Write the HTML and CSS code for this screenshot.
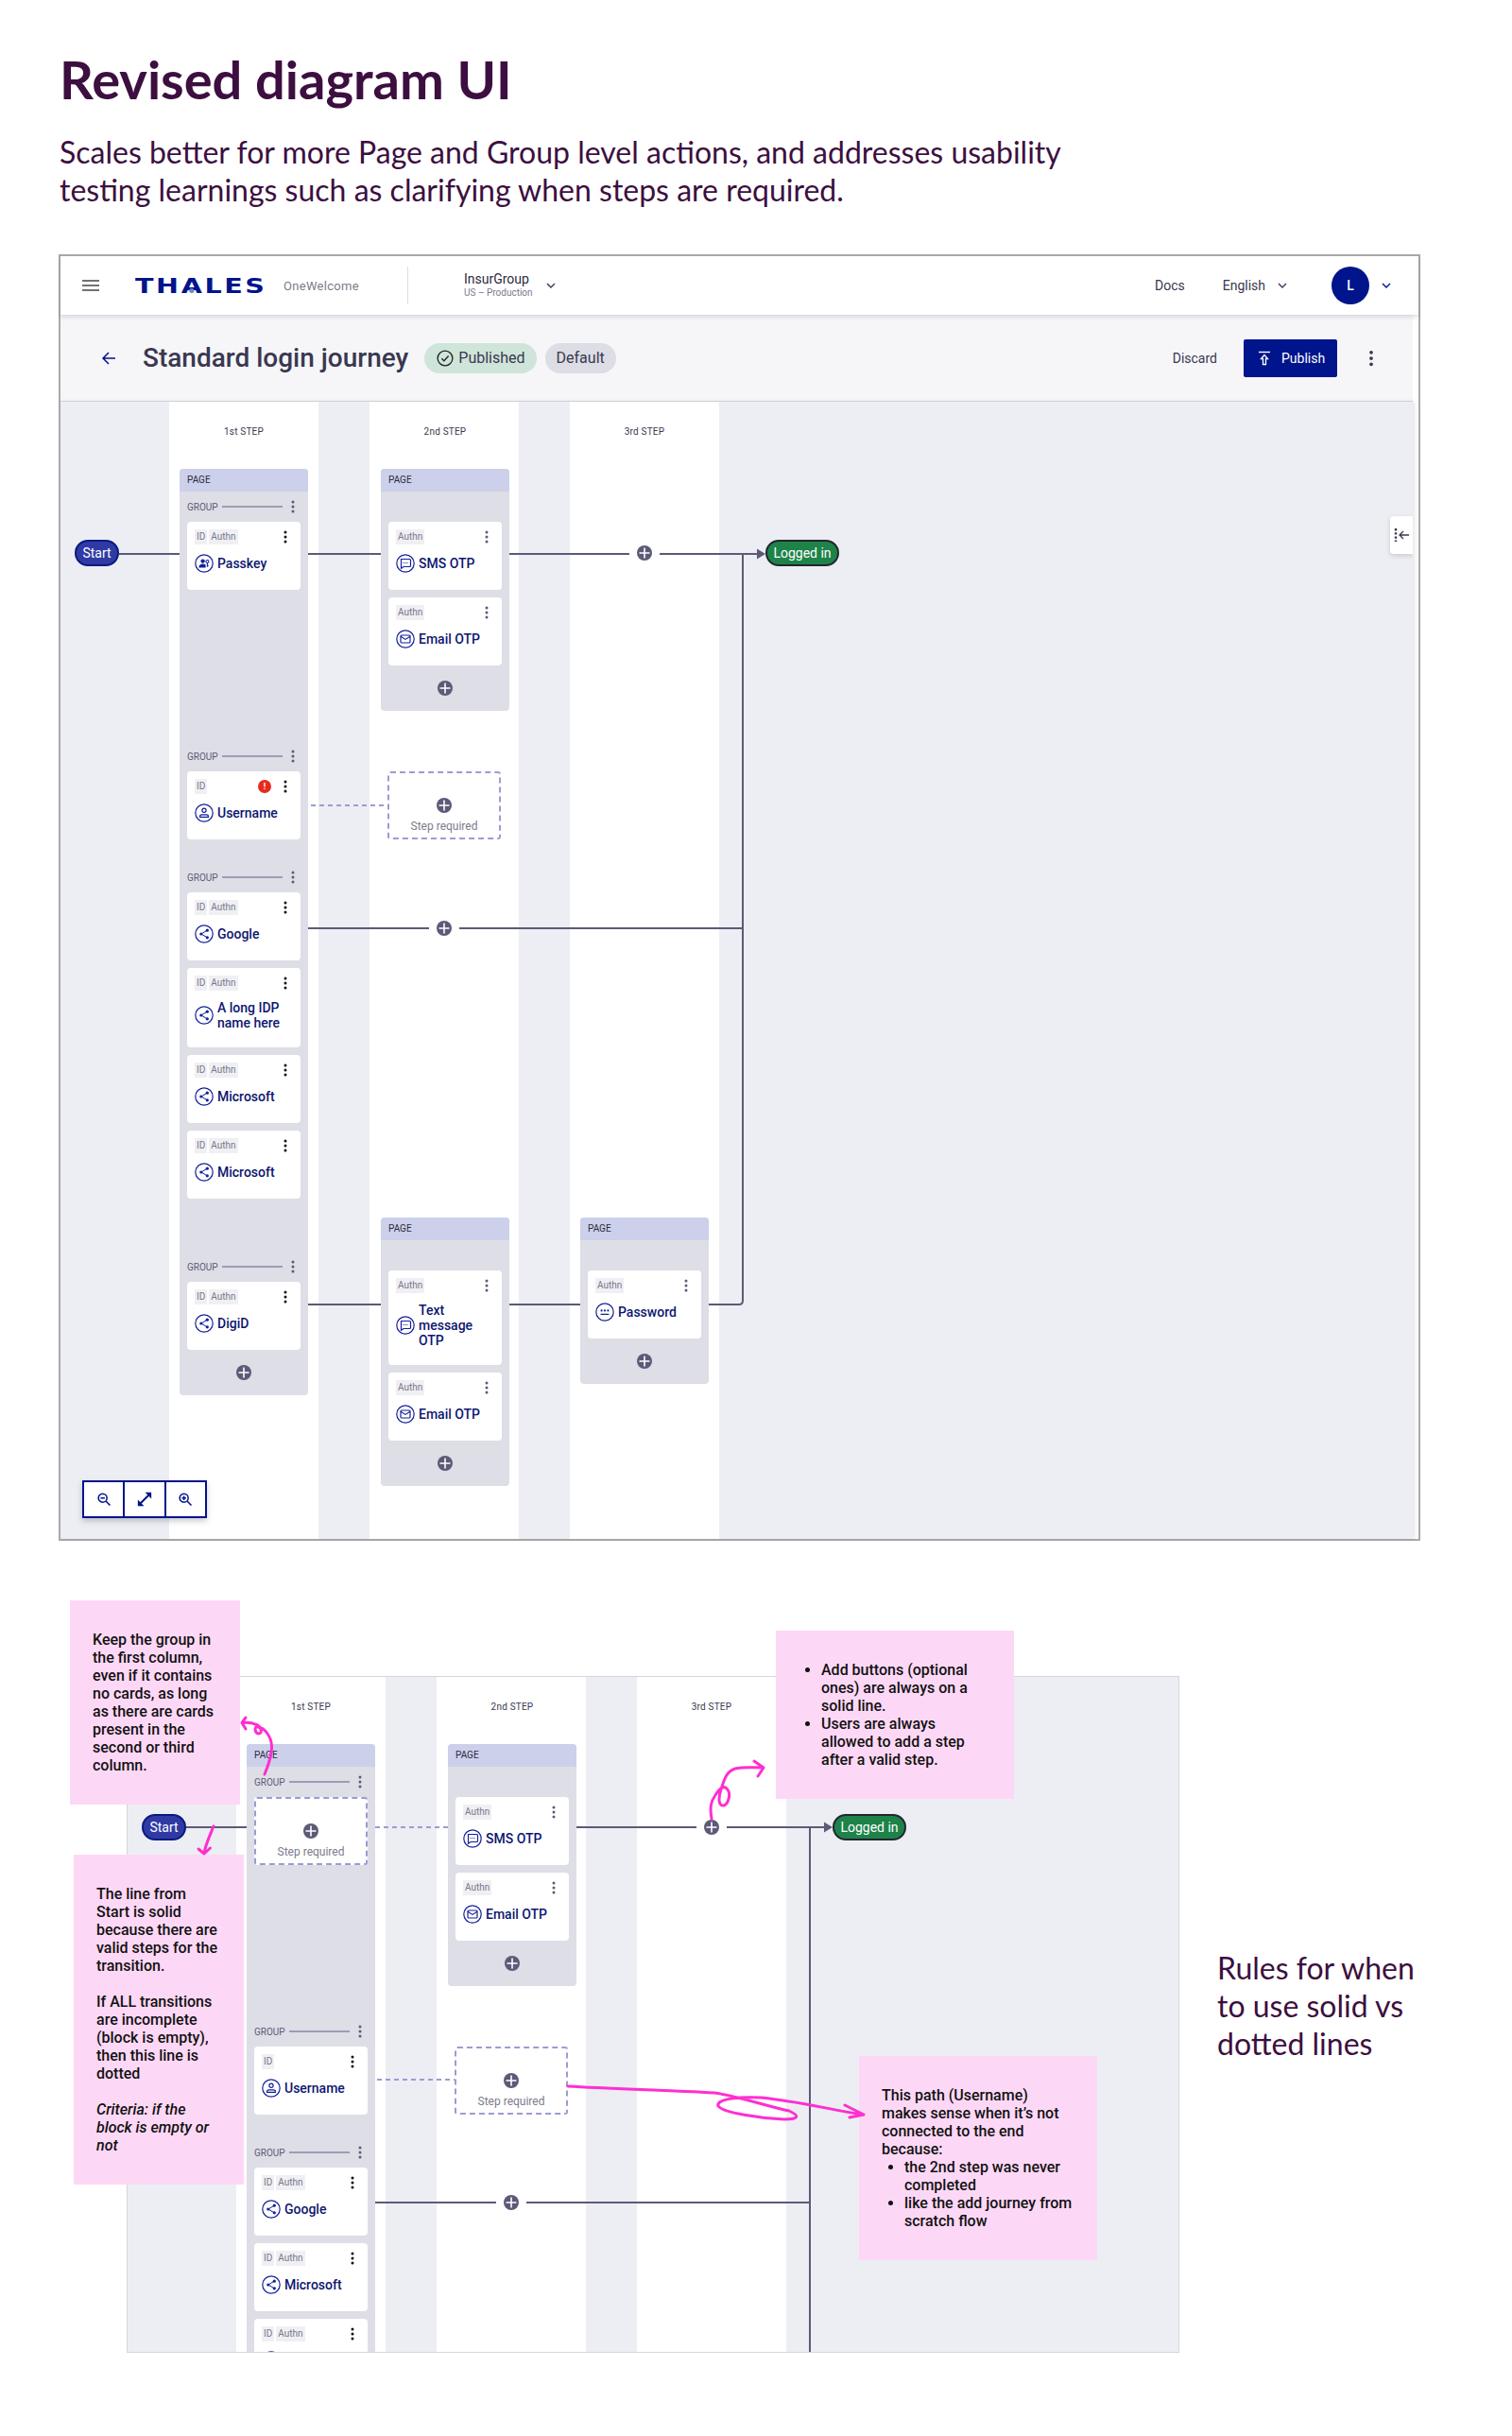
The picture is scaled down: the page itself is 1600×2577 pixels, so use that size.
FILE: index.html
```html
<!DOCTYPE html>
<html lang="en">
<head>
    <meta charset="UTF-8">
    <title>Revised diagram UI</title>
    <link rel="stylesheet" href="styles.css">
</head>
<body>
<svg class="defs" width="0" height="0">
    <symbol id="i-plus" viewBox="0 0 16 16"><circle cx="8" cy="8" r="8" fill="#5c5a78"/><path d="M8 2.5v11M2.5 8h11" stroke="#fff" stroke-width="1.6"/></symbol>
    <symbol id="i-kebab" viewBox="0 0 16 16"><circle cx="8" cy="3" r="1.5" fill="currentColor"/><circle cx="8" cy="8" r="1.5" fill="currentColor"/><circle cx="8" cy="13" r="1.5" fill="currentColor"/></symbol>
    <symbol id="i-share" viewBox="0 0 20 20"><circle cx="10" cy="10" r="9.2" fill="none" stroke="#14209a" stroke-width="1.2"/><path d="M13.3 6.2 6.8 10l6.5 3.8" fill="none" stroke="#14209a" stroke-width="1"/><circle cx="13.3" cy="6.2" r="1.6" fill="#14209a"/><circle cx="6.8" cy="10" r="1.6" fill="#14209a"/><circle cx="13.3" cy="13.8" r="1.6" fill="#14209a"/></symbol>
    <symbol id="i-passkey" viewBox="0 0 20 20"><circle cx="10" cy="10" r="9.2" fill="none" stroke="#14209a" stroke-width="1.2"/><circle cx="8.6" cy="7.6" r="2.2" fill="#14209a"/><path d="M4.4 14.4c0-2.6 2-3.8 4.2-3.8 1.2 0 2.2.3 3 .9v2.9z" fill="#14209a"/><circle cx="13.4" cy="8" r="1.5" fill="none" stroke="#14209a" stroke-width="1.1"/><path d="M13.4 9.5v4.2M13.4 12.2h1.4" fill="none" stroke="#14209a" stroke-width="1.1"/></symbol>
    <symbol id="i-sms" viewBox="0 0 20 20"><circle cx="10" cy="10" r="9.2" fill="none" stroke="#14209a" stroke-width="1.2"/><path d="M5.5 5.5h9a1 1 0 0 1 1 1v6a1 1 0 0 1-1 1H8l-2.5 1.8z" fill="none" stroke="#14209a" stroke-width="1.2"/><path d="M7.5 9.5h5" stroke="#14209a" stroke-width="1" stroke-dasharray="1 1"/></symbol>
    <symbol id="i-email" viewBox="0 0 20 20"><circle cx="10" cy="10" r="9.2" fill="none" stroke="#14209a" stroke-width="1.2"/><rect x="5" y="6" width="10" height="8" rx="1" fill="none" stroke="#14209a" stroke-width="1.2"/><path d="M5 7.2 10 10.4l5-3.2" fill="none" stroke="#14209a" stroke-width="1.2"/></symbol>
    <symbol id="i-user" viewBox="0 0 20 20"><circle cx="10" cy="10" r="9.2" fill="none" stroke="#14209a" stroke-width="1.2"/><circle cx="10" cy="7.2" r="2.1" fill="none" stroke="#14209a" stroke-width="1.2"/><path d="M5.6 14.4v-.8c0-1.2 1-1.8 2-1.8h4.8c1 0 2 .6 2 1.8v.8z" fill="none" stroke="#14209a" stroke-width="1.2"/></symbol>
    <symbol id="i-password" viewBox="0 0 20 20"><circle cx="10" cy="10" r="9.2" fill="none" stroke="#14209a" stroke-width="1.2"/><circle cx="6.6" cy="8.4" r="1.1" fill="#14209a"/><circle cx="10" cy="8.4" r="1.1" fill="#14209a"/><circle cx="13.4" cy="8.4" r="1.1" fill="#14209a"/><path d="M5.6 12.4h8.8" stroke="#14209a" stroke-width="1.2"/></symbol>
    <symbol id="i-chevron" viewBox="0 0 12 12"><path d="M2 4l4 4 4-4" fill="none" stroke="currentColor" stroke-width="1.4"/></symbol>
    <symbol id="i-zoom-out" viewBox="0 0 20 20"><circle cx="8.5" cy="8.5" r="5" fill="none" stroke="#00148c" stroke-width="1.7"/><path d="M6 8.5h5M12.2 12.2l5 5" fill="none" stroke="#00148c" stroke-width="1.7"/></symbol>
    <symbol id="i-zoom-in" viewBox="0 0 20 20"><circle cx="8.5" cy="8.5" r="5" fill="none" stroke="#00148c" stroke-width="1.7"/><path d="M6 8.5h5M8.5 6v5M12.2 12.2l5 5" fill="none" stroke="#00148c" stroke-width="1.7"/></symbol>
    <symbol id="i-expand" viewBox="0 0 20 20"><path d="M5 15 15 5" stroke="#00148c" stroke-width="1.7"/><path d="M10.5 3.5h6v6zM9.5 16.5h-6v-6z" fill="#00148c"/></symbol>
</svg>

<header class="intro">
    <h1>Revised diagram UI</h1>
    <p>Scales better for more Page and Group level actions, and addresses usability<br>testing learnings such as clarifying when steps are required.</p>
</header>

<section class="frame">
    <div class="topbar">
        <svg class="burger" width="20" height="14" viewBox="0 0 20 14"><path d="M1 2h18M1 7h18M1 12h18" stroke="#444" stroke-width="1.6"/></svg>
        <span class="logo">THALES</span>
        <span class="product">OneWelcome</span>
        <span class="top-divider"></span>
        <div class="tenant">
            <span class="tenant-name">InsurGroup</span>
            <span class="tenant-env">US – Production</span>
        </div>
        <svg class="chevron tenant-chevron"><use href="#i-chevron"/></svg>
        <div class="top-right">
            <span class="top-link">Docs</span>
            <span class="top-link lang">English</span>
            <svg class="chevron"><use href="#i-chevron"/></svg>
            <span class="avatar">L</span>
            <svg class="chevron blue"><use href="#i-chevron"/></svg>
        </div>
    </div>
    <div class="subbar">
        <svg class="back" width="16" height="16" viewBox="0 0 16 16"><path d="M15 8H2M8 2 2 8l6 6" fill="none" stroke="#00148c" stroke-width="1.5"/></svg>
        <h2>Standard login journey</h2>
        <span class="pill pill-green">
            <svg width="18" height="18" viewBox="0 0 16 16"><circle cx="8" cy="8" r="7" fill="none" stroke="#222" stroke-width="1.2"/><path d="M4.8 8.2 7 10.4l4.2-4.6" fill="none" stroke="#222" stroke-width="1.2"/></svg>
            Published
        </span>
        <span class="pill pill-grey">Default</span>
        <div class="sub-right">
            <span class="discard">Discard</span>
            <button class="publish">
                <svg width="14" height="16" viewBox="0 0 14 16"><path d="M1 1.5h12" stroke="#fff" stroke-width="1.4"/><path d="M7 4.5 3.5 8.5h2v6h3v-6h2z" fill="none" stroke="#fff" stroke-width="1.3"/></svg>
                Publish
            </button>
            <svg class="sub-kebab"><use href="#i-kebab"/></svg>
        </div>
    </div>
    <div class="canvas canvas-main">
        <div class="col">
            <div class="col-label">1st STEP</div>
            <div class="block">
                <div class="block-head">PAGE</div>
                <div class="group">
                    <div class="group-row"><span>GROUP</span><i></i><svg class="kebab muted"><use href="#i-kebab"/></svg></div>
                    <div class="card">
                        <div class="card-top"><span class="tag">ID</span><span class="tag">Authn</span><svg class="kebab"><use href="#i-kebab"/></svg></div>
                        <div class="card-body"><svg class="card-icon"><use href="#i-passkey"/></svg><span class="card-name">Passkey</span></div>
                    </div>
                </div>
                <div class="group gap-lg">
                    <div class="group-row"><span>GROUP</span><i></i><svg class="kebab muted"><use href="#i-kebab"/></svg></div>
                    <div class="card">
                        <div class="card-top"><span class="tag">ID</span><span class="error-dot">!</span><svg class="kebab next"><use href="#i-kebab"/></svg></div>
                        <div class="card-body"><svg class="card-icon"><use href="#i-user"/></svg><span class="card-name">Username</span></div>
                    </div>
                </div>
                <div class="group gap-sm">
                    <div class="group-row"><span>GROUP</span><i></i><svg class="kebab muted"><use href="#i-kebab"/></svg></div>
                    <div class="card">
                        <div class="card-top"><span class="tag">ID</span><span class="tag">Authn</span><svg class="kebab"><use href="#i-kebab"/></svg></div>
                        <div class="card-body"><svg class="card-icon"><use href="#i-share"/></svg><span class="card-name">Google</span></div>
                    </div>
                    <div class="card">
                        <div class="card-top"><span class="tag">ID</span><span class="tag">Authn</span><svg class="kebab"><use href="#i-kebab"/></svg></div>
                        <div class="card-body"><svg class="card-icon"><use href="#i-share"/></svg><span class="card-name">A long IDP name here</span></div>
                    </div>
                    <div class="card">
                        <div class="card-top"><span class="tag">ID</span><span class="tag">Authn</span><svg class="kebab"><use href="#i-kebab"/></svg></div>
                        <div class="card-body"><svg class="card-icon"><use href="#i-share"/></svg><span class="card-name">Microsoft</span></div>
                    </div>
                    <div class="card">
                        <div class="card-top"><span class="tag">ID</span><span class="tag">Authn</span><svg class="kebab"><use href="#i-kebab"/></svg></div>
                        <div class="card-body"><svg class="card-icon"><use href="#i-share"/></svg><span class="card-name">Microsoft</span></div>
                    </div>
                </div>
                <div class="group gap-md">
                    <div class="group-row"><span>GROUP</span><i></i><svg class="kebab muted"><use href="#i-kebab"/></svg></div>
                    <div class="card">
                        <div class="card-top"><span class="tag">ID</span><span class="tag">Authn</span><svg class="kebab"><use href="#i-kebab"/></svg></div>
                        <div class="card-body"><svg class="card-icon"><use href="#i-share"/></svg><span class="card-name">DigiD</span></div>
                    </div>
                </div>
                <div class="add-row"><svg class="add"><use href="#i-plus"/></svg></div>
            </div>
        </div>
        <div class="col col-mid">
            <div class="col-label">2nd STEP</div>
            <div class="block">
                <div class="block-head">PAGE</div>
                <div class="group">
                    <div class="group-row"></div>
                    <div class="card">
                        <div class="card-top"><span class="tag">Authn</span><svg class="kebab muted"><use href="#i-kebab"/></svg></div>
                        <div class="card-body"><svg class="card-icon"><use href="#i-sms"/></svg><span class="card-name">SMS OTP</span></div>
                    </div>
                    <div class="card">
                        <div class="card-top"><span class="tag">Authn</span><svg class="kebab muted"><use href="#i-kebab"/></svg></div>
                        <div class="card-body"><svg class="card-icon"><use href="#i-email"/></svg><span class="card-name">Email OTP</span></div>
                    </div>
                </div>
                <div class="add-row"><svg class="add"><use href="#i-plus"/></svg></div>
            </div>
            <div class="step-req free">
                <svg class="add"><use href="#i-plus"/></svg>
                <span>Step required</span>
            </div>
            <div class="block low">
                <div class="block-head">PAGE</div>
                <div class="group">
                    <div class="group-row"></div>
                    <div class="card">
                        <div class="card-top"><span class="tag">Authn</span><svg class="kebab muted"><use href="#i-kebab"/></svg></div>
                        <div class="card-body"><svg class="card-icon"><use href="#i-sms"/></svg><span class="card-name">Text message OTP</span></div>
                    </div>
                    <div class="card">
                        <div class="card-top"><span class="tag">Authn</span><svg class="kebab muted"><use href="#i-kebab"/></svg></div>
                        <div class="card-body"><svg class="card-icon"><use href="#i-email"/></svg><span class="card-name">Email OTP</span></div>
                    </div>
                </div>
                <div class="add-row"><svg class="add"><use href="#i-plus"/></svg></div>
            </div>
        </div>
        <div class="col">
            <div class="col-label">3rd STEP</div>
            <div class="block third">
                <div class="block-head">PAGE</div>
                <div class="group">
                    <div class="group-row"></div>
                    <div class="card">
                        <div class="card-top"><span class="tag">Authn</span><svg class="kebab muted"><use href="#i-kebab"/></svg></div>
                        <div class="card-body"><svg class="card-icon"><use href="#i-password"/></svg><span class="card-name">Password</span></div>
                    </div>
                </div>
                <div class="add-row"><svg class="add"><use href="#i-plus"/></svg></div>
            </div>
        </div>

        <svg class="wires" width="1431" height="1203" viewBox="64 425 1431 1203">
            <path class="wire" d="M126 586H190M326 586H403M539 586H666M698 586H803M326 982H454M486 982H786M326 1380H403M539 1380H614M750 1380H782q4 0 4-4V586"/>
            <path class="wire-dots" d="M329 852H410"/>
            <path d="M801 580.5 810 586 801 591.500z" fill="#5c5a78"/>
            <use href="#i-plus" x="674" y="577" width="16" height="16"/>
            <use href="#i-plus" x="462" y="974" width="16" height="16"/>
        </svg>
        <span class="node node-start">Start</span>
        <span class="node node-end">Logged in</span>
        <div class="zoom-bar">
            <span><svg width="18" height="18"><use href="#i-zoom-out"/></svg></span>
            <span><svg width="22" height="22"><use href="#i-expand"/></svg></span>
            <span><svg width="18" height="18"><use href="#i-zoom-in"/></svg></span>
        </div>
        <div class="panel-tab">
            <svg width="20" height="20" viewBox="0 0 20 20"><path d="M4 3v14" stroke="#3a3850" stroke-width="2.400" stroke-dasharray="2.400 1.800"/><path d="M18 10H8M12 6 8 10l4 4" fill="none" stroke="#3a3850" stroke-width="1.300"/></svg>
        </div>
    </div>
</section>

<section class="review">
    <div class="canvas canvas-small">
        <div class="col">
            <div class="col-label">1st STEP</div>
            <div class="block">
                <div class="block-head">PAGE</div>
                <div class="group">
                    <div class="group-row"><span>GROUP</span><i></i><svg class="kebab muted"><use href="#i-kebab"/></svg></div>
                    <div class="step-req">
                        <svg class="add"><use href="#i-plus"/></svg>
                        <span>Step required</span>
                    </div>
                </div>
                <div class="group gap-lg">
                    <div class="group-row"><span>GROUP</span><i></i><svg class="kebab muted"><use href="#i-kebab"/></svg></div>
                    <div class="card">
                        <div class="card-top"><span class="tag">ID</span><svg class="kebab"><use href="#i-kebab"/></svg></div>
                        <div class="card-body"><svg class="card-icon"><use href="#i-user"/></svg><span class="card-name">Username</span></div>
                    </div>
                </div>
                <div class="group gap-sm">
                    <div class="group-row"><span>GROUP</span><i></i><svg class="kebab muted"><use href="#i-kebab"/></svg></div>
                    <div class="card">
                        <div class="card-top"><span class="tag">ID</span><span class="tag">Authn</span><svg class="kebab"><use href="#i-kebab"/></svg></div>
                        <div class="card-body"><svg class="card-icon"><use href="#i-share"/></svg><span class="card-name">Google</span></div>
                    </div>
                    <div class="card">
                        <div class="card-top"><span class="tag">ID</span><span class="tag">Authn</span><svg class="kebab"><use href="#i-kebab"/></svg></div>
                        <div class="card-body"><svg class="card-icon"><use href="#i-share"/></svg><span class="card-name">Microsoft</span></div>
                    </div>
                    <div class="card">
                        <div class="card-top"><span class="tag">ID</span><span class="tag">Authn</span><svg class="kebab"><use href="#i-kebab"/></svg></div>
                        <div class="card-body"><svg class="card-icon"><use href="#i-share"/></svg></div>
                    </div>
                </div>
            </div>
        </div>
        <div class="col col-mid">
            <div class="col-label">2nd STEP</div>
            <div class="block">
                <div class="block-head">PAGE</div>
                <div class="group">
                    <div class="group-row"></div>
                    <div class="card">
                        <div class="card-top"><span class="tag">Authn</span><svg class="kebab muted"><use href="#i-kebab"/></svg></div>
                        <div class="card-body"><svg class="card-icon"><use href="#i-sms"/></svg><span class="card-name">SMS OTP</span></div>
                    </div>
                    <div class="card">
                        <div class="card-top"><span class="tag">Authn</span><svg class="kebab muted"><use href="#i-kebab"/></svg></div>
                        <div class="card-body"><svg class="card-icon"><use href="#i-email"/></svg><span class="card-name">Email OTP</span></div>
                    </div>
                </div>
                <div class="add-row"><svg class="add"><use href="#i-plus"/></svg></div>
            </div>
            <div class="step-req free">
                <svg class="add"><use href="#i-plus"/></svg>
                <span>Step required</span>
            </div>
        </div>
        <div class="col">
            <div class="col-label">3rd STEP</div>
        </div>

        <svg class="wires" width="1112" height="714" viewBox="135 1774 1112 714">
            <path class="wire" d="M197 1933H261M610 1933H737M769 1933H873M857 1933V2489M397 2330H525M557 2330H857"/>
            <path class="wire-dots" d="M397 1933H474M399 2200H481"/>
            <path d="M872 1927.500 881 1933 872 1938.500z" fill="#5c5a78"/>
            <use href="#i-plus" x="745" y="1925" width="16" height="16"/>
            <use href="#i-plus" x="533" y="2322" width="16" height="16"/>
        </svg>
        <span class="node node-start">Start</span>
        <span class="node node-end">Logged in</span>
    </div>

    <aside class="rules">Rules for when<br>to use solid vs<br>dotted lines</aside>

    <div class="note note-group">Keep the group in the first column, even if it contains no cards, as long as there are cards present in the second or third column.</div>
    <div class="note note-start">
        <p>The line from Start is solid because there are valid steps for the transition.</p>
        <p>If ALL transitions are incomplete (block is empty), then this line is dotted</p>
        <p><em>Criteria: if the block is empty or not</em></p>
    </div>
    <div class="note note-add">
        <ul>
            <li>Add buttons (optional ones) are always on a solid line.</li>
            <li>Users are always allowed to add a step after a valid step.</li>
        </ul>
    </div>
    <div class="note note-path">
        This path (Username) makes sense when it’s not connected to the end because:
        <ul>
            <li>the 2nd step was never completed</li>
            <li>like the add journey from scratch flow</li>
        </ul>
    </div>

    <svg class="scribbles" width="1600" height="804" viewBox="0 1773 1600 804">
        <path d="M280 1877C285 1865 288 1855 287.500 1847C287 1838 281 1828 273 1827C268 1826 270 1834 274 1834C278 1834 277 1826 270 1824C266 1822 262 1822 257 1822.500M260 1817 256 1822.500 260 1829"/>
        <path d="M226 1932C222 1942 218 1950 216 1960M210 1956 216 1961 222.500 1955"/>
        <path d="M753 1924C751 1912 752 1906 757 1899C761 1893 765 1888 769 1892C774 1897 771 1908 766 1910C760 1911 760 1902 763 1893C766 1884 768 1874 778 1871C787 1869 797 1870 807 1870M798 1863 808 1870 802 1879"/>
        <path d="M601 2207C650 2210 710 2211 756 2214C780 2217 810 2228 835 2233C846 2238 846 2242 830 2242C805 2241 765 2235 760 2228C757 2220 785 2218 805 2219C840 2222 880 2232 913 2237M894 2227 914 2237 899 2240"/>
    </svg>
</section>
</body>
</html>
```

FILE: styles.css
```css
* {
    box-sizing: border-box;
}
body {
    margin: 0;
    background: #fff;
    font-family: Roboto, "Liberation Sans", sans-serif;
    color: #2c2a40;
}
.defs {
    position: absolute;
}

/* intro */
.intro {
    height: 269px;
    padding: 44px 0 0 63px;
    color: #3c0f40;
    font-family: Lato, sans-serif;
}
.intro h1 {
    margin: 0;
    font-size: 56px;
    line-height: 80px;
    font-weight: 700;
}
.intro p {
    margin: 17px 0 0;
    font-size: 32px;
    line-height: 40px;
}

/* app frame */
.frame {
    width: 1441px;
    height: 1361px;
    margin-left: 62px;
    border: 2px solid #aaa;
    display: flex;
    flex-direction: column;
    background: #fff;
}
.topbar {
    position: relative;
    z-index: 2;
    height: 62px;
    flex: none;
    display: flex;
    align-items: center;
    background: #fff;
    box-shadow: 0 2px 5px rgba(40, 40, 70, 0.18);
}
.burger {
    margin-left: 22px;
}
.logo {
    position: relative;
    margin-left: 37px;
    width: 157px;
    font-family: "DejaVu Sans", sans-serif;
    font-weight: 700;
    font-size: 22px;
    letter-spacing: 2px;
    color: #00148c;
    transform: scaleX(1.3);
    transform-origin: left center;
}
.logo::after {
    content: "";
    position: absolute;
    left: 44px;
    top: 15px;
    width: 4px;
    height: 5px;
    border-radius: 50%;
    background: #6f86d0;
}
.product {
    width: 131px;
    font-size: 13px;
    letter-spacing: 0.3px;
    color: #7c7b8c;
}
.top-divider {
    width: 1px;
    height: 40px;
    background: #dddde4;
}
.tenant {
    margin-left: 59px;
    display: flex;
    flex-direction: column;
}
.tenant-name {
    font-size: 14px;
    line-height: 16px;
}
.tenant-env {
    font-size: 10px;
    line-height: 14px;
    color: #7c7b8c;
}
.chevron {
    width: 12px;
    height: 12px;
    color: #3a3850;
}
.chevron.blue {
    color: #00148c;
    margin-left: 12px;
}
.tenant-chevron {
    margin-left: 13px;
}
.top-right {
    margin-left: auto;
    padding-right: 28px;
    display: flex;
    align-items: center;
}
.top-link {
    font-size: 14px;
    color: #3a3850;
}
.lang {
    margin-left: 40px;
    margin-right: 12px;
}
.avatar {
    width: 40px;
    height: 40px;
    margin-left: 46px;
    border-radius: 50%;
    background: #00148c;
    color: #fff;
    font-size: 14px;
    font-weight: 500;
    display: flex;
    align-items: center;
    justify-content: center;
}
.subbar {
    height: 92px;
    flex: none;
    display: flex;
    align-items: center;
    margin-right: 6px;
    background: #f6f6f9;
    border-bottom: 1px solid #d9d9e0;
}
.back {
    margin-left: 43px;
}
.subbar h2 {
    margin: 0 17px 0 28px;
    font-size: 28px;
    font-weight: 500;
    color: #3a3850;
}
.pill {
    height: 32px;
    padding: 0 12px;
    border-radius: 16px;
    display: flex;
    align-items: center;
    gap: 5px;
    font-size: 16px;
    color: #3a3850;
}
.pill-green {
    padding-left: 13px;
    background: #cfe5da;
}
.pill-grey {
    margin-left: 9px;
    background: #dcdde5;
}
.sub-right {
    margin-left: auto;
    display: flex;
    align-items: center;
}
.discard {
    font-size: 14px;
    color: #3a3850;
}
.publish {
    width: 99px;
    height: 40px;
    margin-left: 28px;
    border: none;
    border-radius: 2px;
    background: #00148c;
    color: #fff;
    font-family: inherit;
    font-size: 14px;
    display: flex;
    align-items: center;
    gap: 11px;
    padding-left: 15px;
}
.sub-kebab {
    width: 20px;
    height: 20px;
    margin: 0 34px 0 26px;
    color: #3a3850;
}

/* diagram */
.canvas {
    position: relative;
    display: flex;
    gap: 54px;
    padding-left: 115px;
    background: #edeef3;
    overflow: hidden;
}
.canvas-main {
    height: 1203px;
    margin-right: 6px;
    box-shadow: 2px 0 4px rgba(40, 40, 70, 0.12);
}
.col {
    width: 158px;
    padding: 0 11px;
    background: #fff;
}
.col-mid {
    padding: 0 10px 0 12px;
}
.col-label {
    height: 71px;
    padding-top: 24px;
    line-height: 16px;
    font-size: 10px;
    letter-spacing: 0.2px;
    text-align: center;
    color: #3a3850;
}
.block {
    background: #dddee6;
    border-radius: 4px;
    overflow: hidden;
}
.block.low {
    margin-top: 400px;
}
.block.third {
    margin-top: 792px;
}
.block-head {
    height: 24px;
    padding-left: 8px;
    line-height: 24px;
    font-size: 10px;
    background: #ccd0ea;
    color: #2c2a40;
}
.group {
    padding: 8px 8px 0;
    display: flex;
    flex-direction: column;
    gap: 8px;
}
.gap-lg {
    margin-top: 160px;
}
.gap-md {
    margin-top: 56px;
}
.gap-sm {
    margin-top: 24px;
}
.group-row {
    height: 16px;
    display: flex;
    align-items: center;
    font-size: 10px;
    color: #5c5a78;
}
.group-row i {
    flex: 1;
    height: 2px;
    margin: 0 3px 0 4px;
    background: #9d9cb6;
}
.kebab {
    width: 16px;
    height: 16px;
    margin-left: auto;
    flex: none;
    color: #111;
}
.kebab.muted {
    color: #5c5a78;
}
.kebab.next {
    margin-left: 5px;
}
.group-row .kebab {
    margin-left: 0;
}
.card {
    padding: 8px 8px 16px;
    background: #fff;
    border-radius: 4px;
}
.card-top {
    height: 16px;
    display: flex;
    align-items: center;
    gap: 2px;
}
.tag {
    height: 16px;
    padding: 0 2px;
    line-height: 16px;
    font-size: 10px;
    background: #f0f0f4;
    color: #77768a;
}
.error-dot {
    width: 14px;
    height: 14px;
    margin-left: auto;
    border-radius: 50%;
    background: #e62b1e;
    color: #fff;
    font-size: 9px;
    font-weight: 700;
    line-height: 14px;
    text-align: center;
}
.card-body {
    min-height: 24px;
    margin-top: 8px;
    display: flex;
    align-items: center;
    gap: 4px;
}
.card-icon {
    width: 20px;
    height: 20px;
    flex: none;
}
.card-name {
    padding: 2px 0;
    font-size: 14px;
    font-weight: 500;
    line-height: 16px;
    color: #0e1670;
}
.add {
    width: 16px;
    height: 16px;
    display: block;
}
.add-row {
    height: 48px;
    display: flex;
    align-items: center;
    justify-content: center;
}
.step-req {
    height: 72px;
    padding-top: 26px;
    display: flex;
    flex-direction: column;
    align-items: center;
    gap: 6px;
    border: 2px dashed #9a9cd4;
    border-radius: 3px;
    background: #fff;
    font-size: 12px;
    line-height: 16px;
    color: #7c7b8c;
}
.step-req.free {
    width: 120px;
    margin: 64px 0 0 7px;
}
.wires {
    position: absolute;
    left: 0;
    top: 0;
    pointer-events: none;
}
.wire {
    fill: none;
    stroke: #5c5a78;
    stroke-width: 2;
}
.wire-dots {
    fill: none;
    stroke: #9a9cd4;
    stroke-width: 2;
    stroke-dasharray: 5 4;
}
.node {
    position: absolute;
    top: 146px;
    height: 28px;
    border-radius: 14px;
    border: 2px solid;
    font-size: 14px;
    line-height: 24px;
    color: #fff;
    text-align: center;
}
.node-start {
    left: 15px;
    width: 47px;
    background: #2f3aa5;
    border-color: #0a1a80;
}
.node-end {
    left: 746px;
    width: 78px;
    background: #1d8348;
    border-color: #22262e;
}
.zoom-bar {
    position: absolute;
    left: 23px;
    bottom: 22px;
    width: 132px;
    height: 40px;
    display: flex;
    border: 2px solid #00148c;
    background: #fff;
    box-shadow: 0 3px 6px rgba(40, 40, 70, 0.25);
}
.zoom-bar span {
    flex: 1;
    display: flex;
    align-items: center;
    justify-content: center;
}
.zoom-bar span + span {
    border-left: 2px solid #00148c;
}
.panel-tab {
    position: absolute;
    right: 0;
    top: 121px;
    width: 24px;
    height: 40px;
    display: flex;
    align-items: center;
    justify-content: center;
    background: #fff;
    border-radius: 4px 0 0 4px;
    box-shadow: 0 2px 5px rgba(40, 40, 70, 0.18);
}

/* second diagram and notes */
.review {
    position: relative;
    height: 804px;
    margin-top: 143px;
    padding-left: 134px;
    display: flex;
    align-items: flex-start;
}
.canvas-small {
    width: 1114px;
    height: 716px;
    border: 1px solid #d5d5dd;
}
.canvas-small .node {
    top: 145px;
}
.rules {
    margin: 289px 0 0 40px;
    color: #3c0f40;
    font-family: Lato, sans-serif;
    font-size: 32px;
    line-height: 40px;
}
.note {
    position: absolute;
    padding: 32px 24px;
    background: #fdd8f6;
    color: #111;
    font-size: 16px;
    font-weight: 500;
    line-height: 19px;
}
.note p {
    margin: 0 0 19px;
}
.note p:last-child {
    margin: 0;
}
.note ul {
    margin: 0;
    padding-left: 24px;
}
.note-group {
    left: 74px;
    top: -80px;
    width: 180px;
}
.note-start {
    left: 78px;
    top: 189px;
    width: 180px;
}
.note-add {
    left: 821px;
    top: -48px;
    width: 252px;
}
.note-path {
    left: 909px;
    top: 402px;
    width: 252px;
}
.scribbles {
    position: absolute;
    left: 0;
    top: 0;
    overflow: visible;
    pointer-events: none;
}
.scribbles path {
    fill: none;
    stroke: #ff2ed1;
    stroke-width: 3;
    stroke-linecap: round;
    stroke-linejoin: round;
}
```
